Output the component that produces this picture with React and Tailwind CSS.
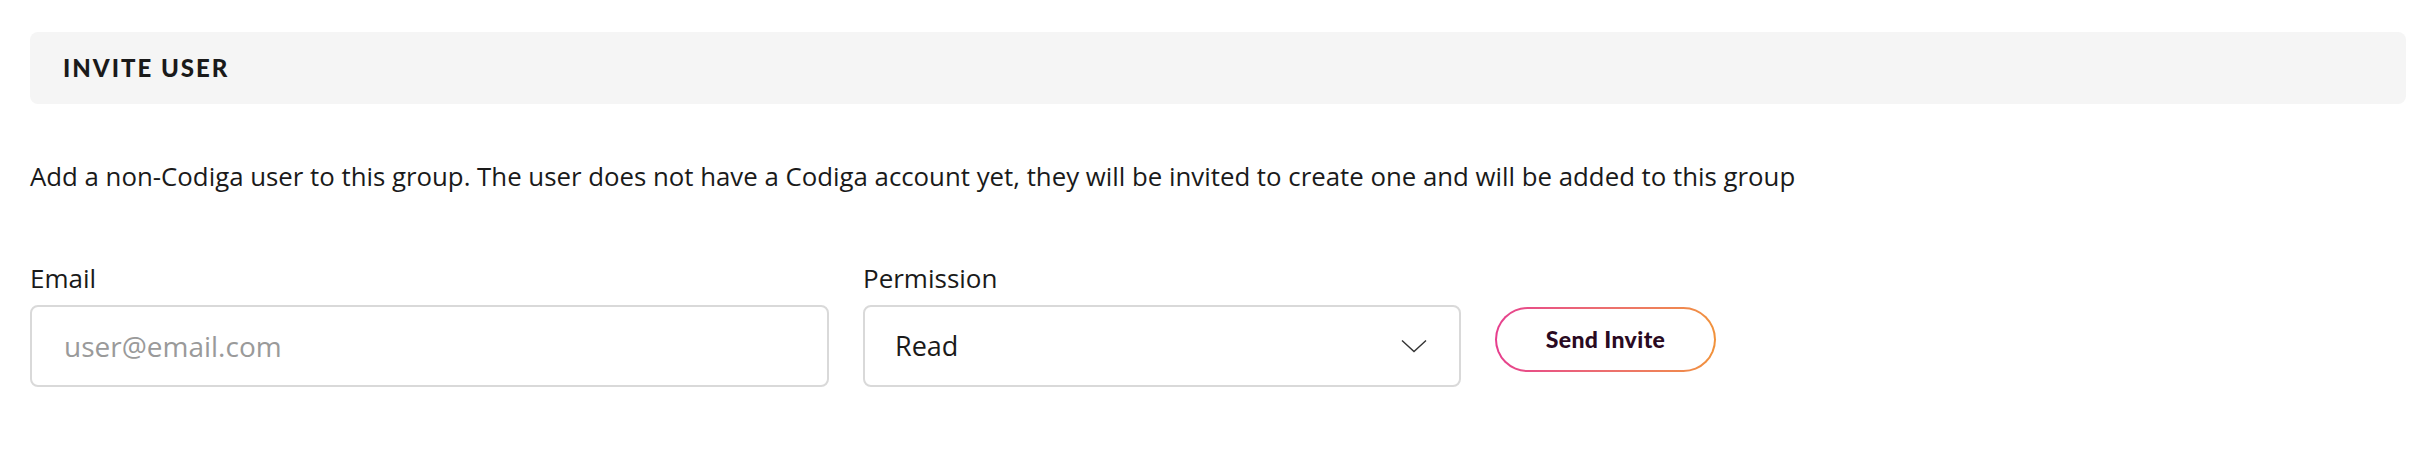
import React from 'react';

function ChevronDown() {
  return (
    <svg width="26" height="14" viewBox="0 0 26 14" fill="none" className="shrink-0">
      <path d="M1 1.5L13 12.5L25 1.5" stroke="#333333" strokeWidth="1.4" />
    </svg>
  );
}

export default function App() {
  const body = { fontFamily: '"Open Sans", "Noto Sans", sans-serif' };
  const heading = { fontFamily: 'Lato, "Liberation Sans", sans-serif' };

  return (
    <div className="w-full bg-white pt-[32px] pl-[30px] pr-[28px]" style={body}>
      {/* Section header */}
      <div className="h-[72px] rounded-[8px] bg-[#f5f5f5] flex items-center pl-[33px]">
        <h2
          className="text-[24px] font-black uppercase tracking-[2px] text-[#1a1a1a] leading-none"
          style={heading}
        >
          Invite User
        </h2>
      </div>

      <p className="mt-[54px] text-[25.8px] leading-[36px] text-[#1a1a1a]">
        Add a non-Codiga user to this group. The user does not have a Codiga account yet, they will be invited to create one and will be added to this group
      </p>

      {/* Form row */}
      <div className="mt-[66px] flex items-end gap-[34px]">
        <div className="flex flex-col">
          <label className="text-[26px] leading-[36px] text-[#1a1a1a] mb-[9px]">Email</label>
          <input
            type="email"
            placeholder="user@email.com"
            className="w-[799px] h-[82px] rounded-[8px] border-2 border-[#d9d9d9] px-[32px] text-[28px] text-[#1a1a1a] placeholder:text-[#9a9a9a] outline-none"
          />
        </div>

        <div className="flex flex-col">
          <label className="text-[26px] leading-[36px] text-[#1a1a1a] mb-[9px]">Permission</label>
          <button
            type="button"
            className="w-[598px] h-[82px] rounded-[8px] border-2 border-[#d9d9d9] pl-[30px] pr-[32px] flex items-center justify-between text-[27px] text-[#1a1a1a] bg-white"
          >
            <span>Read</span>
            <ChevronDown />
          </button>
        </div>

        <div className="mb-[15px] rounded-full bg-linear-to-r from-[#e63e8e] to-[#f1923a] p-[2px]">
          <button
            type="button"
            className="w-[217px] h-[61px] rounded-full bg-white text-[23px] font-black text-[#2a0a22] tracking-[0.4px]"
            style={heading}
          >
            Send Invite
          </button>
        </div>
      </div>
    </div>
  );
}
